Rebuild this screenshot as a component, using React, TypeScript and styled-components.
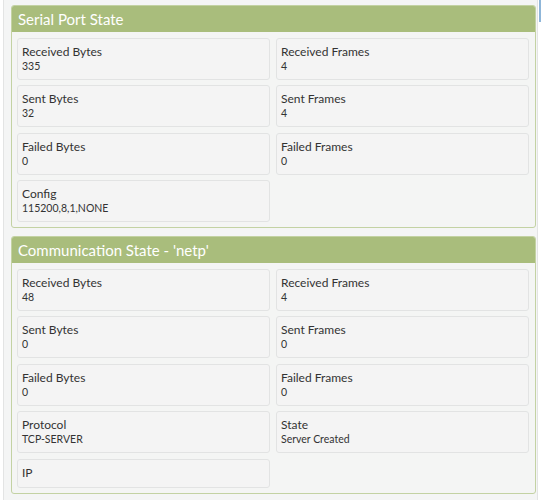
import styled, { createGlobalStyle } from "styled-components";

const GlobalStyle = createGlobalStyle`
    html, body {
        margin: 0;
        padding: 0;
        background: #ffffff;
    }
    body {
        font-family: Lato, "Open Sans", sans-serif;
        color: #333333;
    }
`;

const Frame = styled.div`
    position: relative;
    width: 541px;
    height: 500px;
    box-sizing: border-box;
    padding: 0 3px 0 3px;
    overflow: hidden;
`;

const Page = styled.div`
    height: 100%;
    box-sizing: border-box;
    border-left: 1px solid #e3e4e4;
    border-right: 1px solid #e3e4e4;
    background: #f4f5f5;
    padding: 5px 1px 0 7px;
    display: flex;
    flex-direction: column;
    gap: 8px;
`;

const ScrollMark = styled.div`
    position: absolute;
    top: 0;
    right: 0;
    width: 2px;
    height: 22px;
    background: #8fb6d9;
`;

const Panel = styled.section`
    flex-shrink: 0;
    border: 1px solid #c3d2a3;
    border-radius: 3px;
    background: #f4f5f4;
    overflow: hidden;
`;

const PanelHeader = styled.h2`
    margin: 0;
    height: 26px;
    padding: 0 6px;
    background: #a9bd7c;
    color: #ffffff;
    font-size: 15px;
    font-weight: 400;
    line-height: 26px;
`;

const Grid = styled.div`
    display: grid;
    grid-template-columns: 1fr 1fr;
    gap: 5.5px 6px;
    padding: 5.5px 6px 5px 5px;
`;

const Card = styled.div`
    box-sizing: border-box;
    border: 1px solid #e2e3e3;
    border-radius: 3px;
    background: #f4f4f4;
    padding: 5px 4px 6px;
`;

const Label = styled.div`
    font-size: 12px;
    line-height: 16px;
    color: #333333;
`;

const Value = styled.div`
    font-size: 10.5px;
    line-height: 13px;
    color: #333333;
`;

interface Item {
    label: string;
    value?: string;
}

const SERIAL: Item[] = [
    { label: "Received Bytes", value: "335" },
    { label: "Received Frames", value: "4" },
    { label: "Sent Bytes", value: "32" },
    { label: "Sent Frames", value: "4" },
    { label: "Failed Bytes", value: "0" },
    { label: "Failed Frames", value: "0" },
    { label: "Config", value: "115200,8,1,NONE" },
];

const COMM: Item[] = [
    { label: "Received Bytes", value: "48" },
    { label: "Received Frames", value: "4" },
    { label: "Sent Bytes", value: "0" },
    { label: "Sent Frames", value: "0" },
    { label: "Failed Bytes", value: "0" },
    { label: "Failed Frames", value: "0" },
    { label: "Protocol", value: "TCP-SERVER" },
    { label: "State", value: "Server Created" },
    { label: "IP" },
];

const StatePanel = ({ title, items }: { title: string; items: Item[] }) => (
    <Panel>
        <PanelHeader>{title}</PanelHeader>
        <Grid>
            {items.map((item) => (
                <Card key={item.label}>
                    <Label>{item.label}</Label>
                    {item.value && <Value>{item.value}</Value>}
                </Card>
            ))}
        </Grid>
    </Panel>
);

export default function App() {
    return (
        <Frame>
            <GlobalStyle />
            <Page>
                <StatePanel title="Serial Port State" items={SERIAL} />
                <StatePanel title="Communication State - 'netp'" items={COMM} />
            </Page>
            <ScrollMark />
        </Frame>
    );
}
